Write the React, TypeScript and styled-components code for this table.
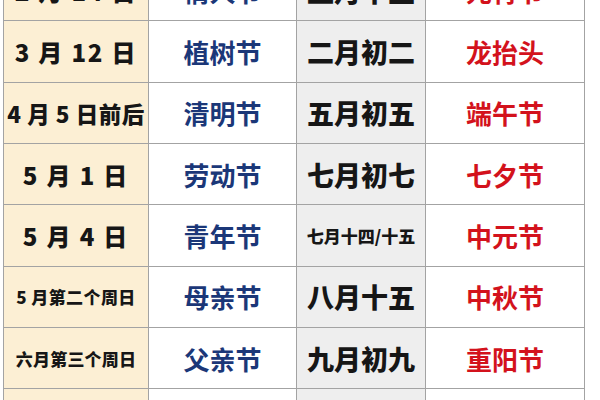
import React from 'react';
import styled, {createGlobalStyle} from 'styled-components';

const GlobalStyle = createGlobalStyle`
    html, body {
        margin: 0;
        padding: 0;
        background: #ffffff;
    }

    body {
        font-family: "Noto Sans CJK SC", "Noto Sans", sans-serif;
        overflow: hidden;
    }
`

// one sheet, four columns: 公历日期 / 节日 / 农历日期 / 节日
const Sheet = styled.div`
    display: grid;
    grid-template-columns: 145px 148px 129px 159px;
    grid-auto-rows: 61.33px;
    margin: -41px 0 0 3px;
    width: max-content;
    border-top: 1px solid #a3a3a3;
    border-left: 1px solid #a3a3a3;
`

type Tone = 'black' | 'blue' | 'red';

const colors: Record<Tone, string> = {
    black: '#161616',
    blue: '#1b3778',
    red: '#d3121c',
};

const Cell = styled.div<{$bg: string; $tone: Tone; $size: number; $spacing?: number}>`
    box-sizing: border-box;
    display: flex;
    align-items: center;
    justify-content: center;
    background: ${p => p.$bg};
    border-right: 1px solid #a3a3a3;
    border-bottom: 1px solid #a3a3a3;
    color: ${p => colors[p.$tone]};
    font-size: ${p => p.$size}px;
    font-weight: ${p => (p.$tone === 'black' ? 900 : 700)};
    letter-spacing: ${p => p.$spacing ?? 0}px;
    white-space: pre;
    overflow: hidden;
`

type Row = {
    solar: string;
    solarSize?: number;
    solarSpacing?: number;
    name: string;
    lunar: string;
    lunarSize?: number;
    lunarName: string;
};

const rows: Row[] = [
    {solar: '2 月 14 日', name: '情人节', lunar: '正月十五', lunarName: '元宵节'},
    {solar: '3 月 12 日', name: '植树节', lunar: '二月初二', lunarName: '龙抬头'},
    {solar: '4 月 5 日前后', solarSize: 22.5, solarSpacing: 0.5, name: '清明节', lunar: '五月初五', lunarName: '端午节'},
    {solar: '5 月 1 日', name: '劳动节', lunar: '七月初七', lunarName: '七夕节'},
    {solar: '5 月 4 日', name: '青年节', lunar: '七月十四/十五', lunarSize: 17, lunarName: '中元节'},
    {solar: '5 月第二个周日', solarSize: 17, solarSpacing: 0.4, name: '母亲节', lunar: '八月十五', lunarName: '中秋节'},
    {solar: '六月第三个周日', solarSize: 17, solarSpacing: 0.2, name: '父亲节', lunar: '九月初九', lunarName: '重阳节'},
    {solar: '12 月 25 日', name: '圣诞节', lunar: '腊月初八', lunarName: '腊八节'},
];

export default function App() {
    return (
        <>
            <GlobalStyle />
            <Sheet>
                {rows.map(r => (
                    <React.Fragment key={r.solar}>
                        <Cell $bg="#fcefd4" $tone="black" $size={r.solarSize ?? 24} $spacing={r.solarSpacing ?? 1.8}>
                            {r.solar}
                        </Cell>
                        <Cell $bg="#ffffff" $tone="blue" $size={26}>
                            {r.name}
                        </Cell>
                        <Cell $bg="#eeeeee" $tone="black" $size={r.lunarSize ?? 27}>
                            {r.lunar}
                        </Cell>
                        <Cell $bg="#ffffff" $tone="red" $size={26}>
                            {r.lunarName}
                        </Cell>
                    </React.Fragment>
                ))}
            </Sheet>
        </>
    )
}
